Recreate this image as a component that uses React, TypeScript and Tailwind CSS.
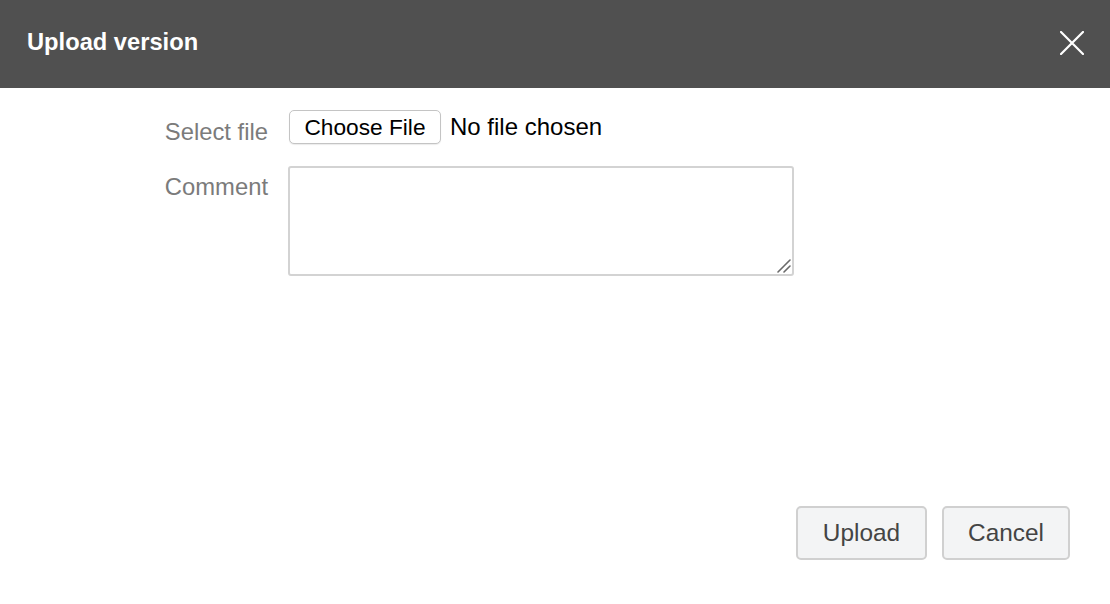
export default function App() {
  return (
    <div className="w-[1110px] h-[604px] bg-white flex flex-col overflow-hidden" style={{ fontFamily: '"Liberation Sans", Arial, sans-serif' }}>
      <div className="h-[88px] bg-[#505050] flex items-center justify-between pl-[27px] pr-[26px] pb-[2px] shrink-0">
        <h1 className="text-white text-[23.7px] font-bold leading-none">Upload version</h1>
        <svg width="24" height="24" viewBox="0 0 24 24" className="text-white">
          <path d="M1 1 L23 23 M23 1 L1 23" stroke="currentColor" strokeWidth="2.2" strokeLinecap="square" />
        </svg>
      </div>
      <div className="flex-1 flex flex-col justify-between pt-[22px] pb-[44px]">
        <div className="flex flex-col gap-[22px]">
          <div className="flex items-start">
            <div className="w-[269px] pr-[1px] text-right text-[23.8px] text-[#7b7b7b] leading-none pt-[10px]">Select file</div>
            <div className="flex items-center ml-[20px]">
              <div className="h-[34px] w-[152px] justify-center border border-[#c4c4c4] rounded-[5px] bg-white flex items-center text-[22.7px] text-black leading-none shadow-[0_1px_1px_rgba(0,0,0,0.08)]">Choose File</div>
              <span className="ml-[9px] text-[24px] text-black leading-none">No file chosen</span>
            </div>
          </div>
          <div className="flex items-start">
            <div className="w-[269px] pr-[1px] text-right text-[23.8px] text-[#7b7b7b] leading-none pt-[9px]">Comment</div>
            <div className="relative ml-[19px]">
              <textarea className="block w-[506px] h-[110px] border-2 border-[#d3d3d3] rounded-[3px] outline-none resize-none bg-white" />
              <svg width="14" height="14" viewBox="0 0 14 14" className="absolute right-[3px] bottom-[3px] pointer-events-none">
                <path d="M1 13 L13 1 M7 13 L13 7" stroke="#6a6a6a" strokeWidth="1.6" strokeLinecap="round" />
              </svg>
            </div>
          </div>
        </div>
        <div className="flex justify-end gap-[15px] pr-[40px]">
          <button className="w-[131px] h-[54px] bg-[#f3f4f5] border-2 border-[#d0d0d0] rounded-[5px] text-[24.4px] text-[#444] leading-none">Upload</button>
          <button className="w-[128px] h-[54px] bg-[#f3f4f5] border-2 border-[#d0d0d0] rounded-[5px] text-[24.4px] text-[#444] leading-none">Cancel</button>
        </div>
      </div>
    </div>
  );
}
